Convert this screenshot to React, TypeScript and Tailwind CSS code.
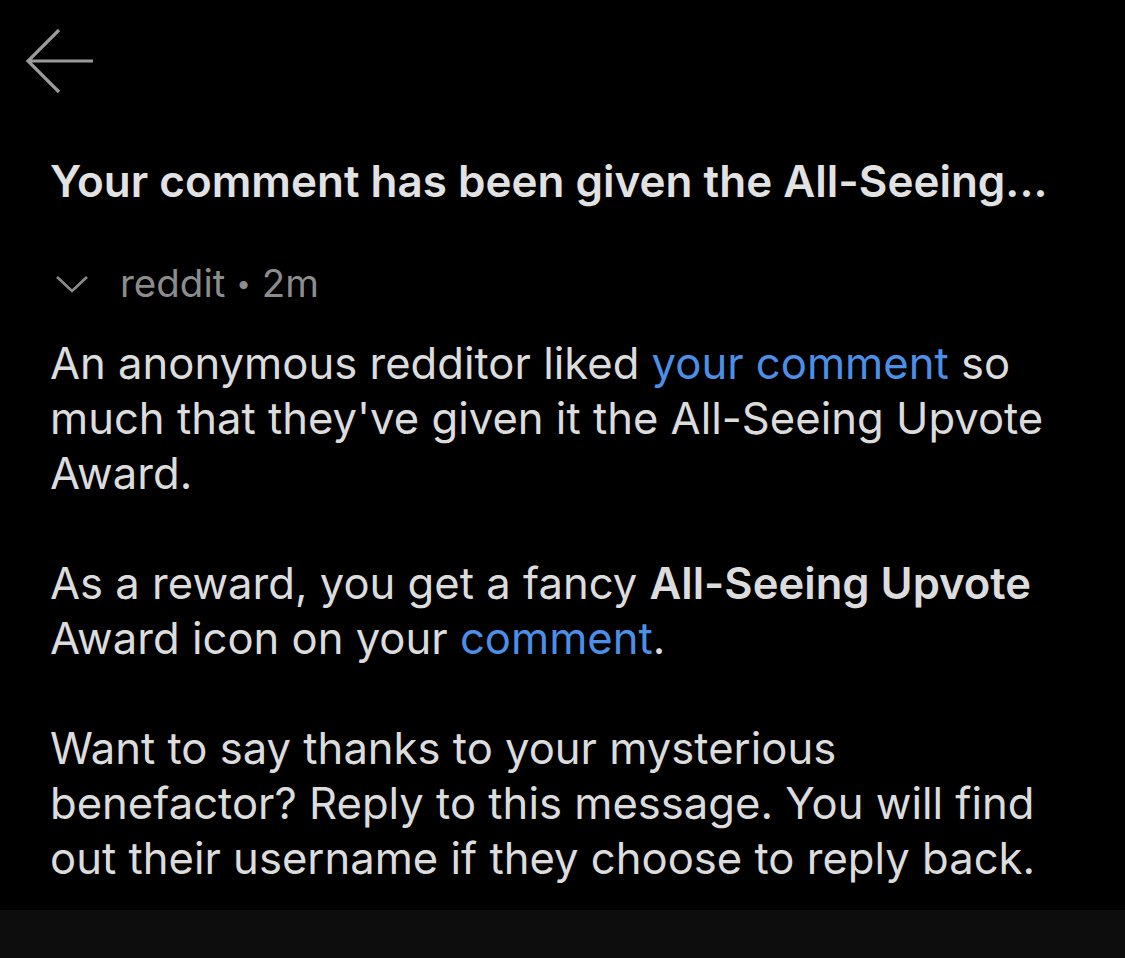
import React from 'react';

const App: React.FC = () => {
  return (
    <div
      className="w-[1125px] h-[958px] bg-black flex flex-col overflow-hidden"
      style={{ fontFamily: 'Inter, "Noto Sans", sans-serif' }}
    >
      {/* Header */}
      <div className="h-[153px] pl-[25px] pt-[28px]">
        <svg width="70" height="68" viewBox="0 0 70 68" fill="none">
          <path d="M68 33H3M34 2L3 33l31 31" stroke="#9b9b9b" strokeWidth="3.2" />
        </svg>
      </div>

      {/* Message */}
      <div className="flex-1 px-[50px]">
        <h1 className="text-[44px] leading-[56px] font-semibold text-[#e2e2e2] whitespace-nowrap">
          Your comment has been given the All-Seeing...
        </h1>

        <div className="flex items-center mt-[55px] h-[40px]">
          <svg width="34" height="20" viewBox="0 0 34 20" fill="none" className="ml-[5px] mr-[31px]">
            <path d="M2 3l15 14L32 3" stroke="#8a8a8a" strokeWidth="2.6" />
          </svg>
          <span className="text-[38.5px] text-[#8c8c8c]">
            reddit <span className="text-[26px] align-[4px]">•</span> 2m
          </span>
        </div>

        <div className="mt-[32px] w-[1005px] text-[43.6px] leading-[55px] text-[#dcdcdc]">
          <p>
            An anonymous redditor liked <span className="text-[#4c8fe6]">your comment</span> so much that
            they've given it the All-Seeing Upvote Award.
          </p>
          <p className="mt-[55px]">
            As a reward, you get a fancy <span className="font-semibold">All-Seeing Upvote</span> Award icon on
            your <span className="text-[#4c8fe6]">comment</span>.
          </p>
          <p className="mt-[55px]">
            Want to say thanks to your mysterious benefactor? Reply to this message. You will find out their
            username if they choose to reply back.
          </p>
        </div>
      </div>

      {/* Bottom bar */}
      <div className="h-[48px] bg-[#0d0d0d]" />
    </div>
  );
};

export default App;
